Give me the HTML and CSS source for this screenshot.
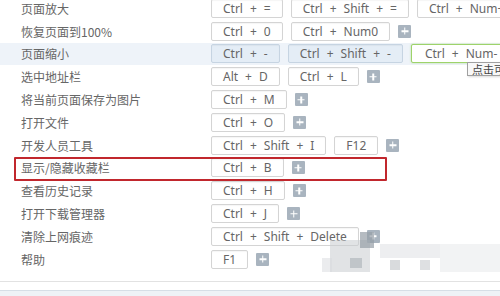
FILE: index.html
```html
<!DOCTYPE html>
<html lang="zh-CN">
<head>
<meta charset="utf-8">
<title>快捷键</title>
<link rel="stylesheet" href="styles.css">
</head>
<body>
<div class="page">
  <div class="list">
    <div class="row">
      <span class="label">页面放大</span>
      <div class="keys">
        <span class="key"><i>Ctrl</i><i>+</i><i>=</i></span>
        <span class="key"><i>Ctrl</i><i>+</i><i>Shift</i><i>+</i><i>=</i></span>
        <span class="key"><i>Ctrl</i><i>+</i><i>Num+</i></span>
      </div>
    </div>
    <div class="row">
      <span class="label">恢复页面到100%</span>
      <div class="keys">
        <span class="key"><i>Ctrl</i><i>+</i><i>0</i></span>
        <span class="key"><i>Ctrl</i><i>+</i><i>Num0</i></span>
        <span class="add"></span>
      </div>
    </div>
    <div class="row active">
      <span class="label">页面缩小</span>
      <div class="keys">
        <span class="key"><i>Ctrl</i><i>+</i><i>-</i></span>
        <span class="key"><i>Ctrl</i><i>+</i><i>Shift</i><i>+</i><i>-</i></span>
        <span class="key editing"><i>Ctrl</i><i>+</i><i>Num-</i></span>
      </div>
      <span class="tip">点击可修改</span>
    </div>
    <div class="row">
      <span class="label">选中地址栏</span>
      <div class="keys">
        <span class="key"><i>Alt</i><i>+</i><i>D</i></span>
        <span class="key"><i>Ctrl</i><i>+</i><i>L</i></span>
        <span class="add"></span>
      </div>
    </div>
    <div class="row">
      <span class="label">将当前页面保存为图片</span>
      <div class="keys">
        <span class="key"><i>Ctrl</i><i>+</i><i>M</i></span>
        <span class="add"></span>
      </div>
    </div>
    <div class="row">
      <span class="label">打开文件</span>
      <div class="keys">
        <span class="key"><i>Ctrl</i><i>+</i><i>O</i></span>
        <span class="add"></span>
      </div>
    </div>
    <div class="row">
      <span class="label">开发人员工具</span>
      <div class="keys">
        <span class="key"><i>Ctrl</i><i>+</i><i>Shift</i><i>+</i><i>I</i></span>
        <span class="key"><i>F12</i></span>
        <span class="add"></span>
      </div>
    </div>
    <div class="row">
      <span class="label">显示/隐藏收藏栏</span>
      <div class="keys">
        <span class="key"><i>Ctrl</i><i>+</i><i>B</i></span>
        <span class="add"></span>
      </div>
      <span class="mark"></span>
    </div>
    <div class="row">
      <span class="label">查看历史记录</span>
      <div class="keys">
        <span class="key"><i>Ctrl</i><i>+</i><i>H</i></span>
        <span class="add"></span>
      </div>
    </div>
    <div class="row">
      <span class="label">打开下载管理器</span>
      <div class="keys">
        <span class="key"><i>Ctrl</i><i>+</i><i>J</i></span>
        <span class="add"></span>
      </div>
    </div>
    <div class="row">
      <span class="label">清除上网痕迹</span>
      <div class="keys">
        <span class="key"><i>Ctrl</i><i>+</i><i>Shift</i><i>+</i><i>Delete</i></span>
        <span class="add"></span>
      </div>
    </div>
    <div class="row">
      <span class="label">帮助</span>
      <div class="keys">
        <span class="key"><i>F1</i></span>
        <span class="add"></span>
      </div>
    </div>
  </div>
  <div class="divider"></div>
  <div class="footer"></div>
  <div class="mosaic">
    <span class="m1"></span><span class="m2"></span><span class="m3"></span>
    <span class="m4"></span><span class="m5"></span><span class="m6"></span>
    <span class="m7"></span><span class="m8"></span>
  </div>
</div>
</body>
</html>
```

FILE: styles.css
```css
html, body {
  margin: 0;
  padding: 0;
  background: #ffffff;
  overflow: hidden;
}

.page {
  position: relative;
  width: 500px;
  height: 296px;
  overflow: hidden;
  font-family: "Noto Sans", "Noto Sans CJK SC", sans-serif;
}

.list {
  margin-top: -3px;
  display: flex;
  flex-direction: column;
}

.row {
  position: relative;
  height: 22.8px;
  display: flex;
  align-items: center;
  white-space: nowrap;
}

.row.active {
  background: #eef3f9;
}

.label {
  flex: none;
  width: 190px;
  padding-left: 21px;
  font-family: "Noto Sans CJK SC", sans-serif;
  font-size: 12px;
  color: #666666;
}

.keys {
  display: flex;
  align-items: center;
  gap: 8px;
  flex: none;
}

.key {
  display: inline-flex;
  align-items: center;
  gap: 7px;
  box-sizing: border-box;
  height: 19px;
  padding: 0 11px;
  border: 1px solid #d4d4d4;
  border-radius: 2px;
  background: #ffffff;
  box-shadow: inset 0 1px 1px rgba(0, 0, 0, 0.04);
  font-size: 12px;
  color: #666666;
  flex: none;
}

.key i {
  font-style: normal;
}

.row.active .key {
  background: #e4edf6;
  border-color: #c6d4e2;
}

.row.active .key.editing {
  background: #ffffff;
  border-color: #9ed36a;
  box-shadow: 0 0 2px rgba(130, 200, 80, 0.6);
  padding-left: 13px;
}

.add {
  position: relative;
  flex: none;
  width: 13px;
  height: 13px;
  border-radius: 1px;
  background: #a9b4bf;
}

.add::before,
.add::after {
  content: "";
  position: absolute;
  background: #ffffff;
  left: 50%;
  top: 50%;
  transform: translate(-50%, -50%);
}

.add::before {
  width: 7px;
  height: 1.5px;
}

.add::after {
  width: 1.5px;
  height: 7px;
}

.tip {
  position: absolute;
  left: 467px;
  top: 19px;
  height: 14px;
  line-height: 13px;
  padding: 0 4px;
  box-sizing: border-box;
  border: 1px solid #a0a0a0;
  background: #f8f8f8;
  box-shadow: 1px 1px 2px rgba(0, 0, 0, 0.15);
  font-family: "Noto Sans CJK SC", sans-serif;
  font-size: 11px;
  color: #444;
}

.mark {
  position: absolute;
  left: 14px;
  top: 0;
  width: 373px;
  height: 24px;
  box-sizing: border-box;
  border: 2px solid #c1272d;
  border-radius: 1px;
}

.divider {
  margin-top: 10px;
  height: 1px;
  background: #e2e2e2;
}

.footer {
  margin-top: 8px;
  height: 20px;
  border-top: 1px solid #d6dee6;
  background: #eef2f6;
}

.mosaic {
  position: absolute;
  left: 0;
  top: 0;
  width: 500px;
  height: 296px;
  pointer-events: none;
}

.mosaic span {
  position: absolute;
  display: block;
}

.m1 { left: 330px; top: 240px; width: 40px; height: 32px; background: rgba(200, 204, 208, 0.55); }
.m2 { left: 360px; top: 232px; width: 14px; height: 16px; background: rgba(150, 158, 166, 0.7); }
.m3 { left: 350px; top: 258px; width: 12px; height: 10px; background: rgba(170, 176, 182, 0.6); }
.m4 { left: 380px; top: 244px; width: 60px; height: 14px; background: rgba(220, 222, 225, 0.5); }
.m5 { left: 390px; top: 260px; width: 10px; height: 10px; background: rgba(180, 184, 188, 0.5); }
.m6 { left: 420px; top: 260px; width: 10px; height: 10px; background: rgba(190, 194, 198, 0.5); }
.m7 { left: 440px; top: 244px; width: 60px; height: 28px; background: rgba(230, 232, 234, 0.5); }
.m8 { left: 322px; top: 258px; width: 10px; height: 14px; background: rgba(215, 218, 222, 0.5); }
```
